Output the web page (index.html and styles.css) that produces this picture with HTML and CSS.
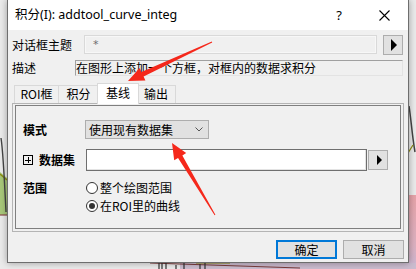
FILE: index.html
```html
<!DOCTYPE html>
<html>
<head>
<meta charset="utf-8">
<link rel="stylesheet" href="styles.css">
</head>
<body>
<div class="desk">
  <svg class="bg" width="416" height="269" viewBox="0 0 416 269">
    <rect width="416" height="269" fill="#ebebeb"/>
    <polygon points="0,172 7,178 7,215 0,215" fill="#a8c87a"/>
    <path d="M0,174 L7,180" stroke="#8c8c10" stroke-width="1.5" fill="none"/>
    <path d="M0,215 L7,215" stroke="#8a4a4a" stroke-width="1.2" fill="none"/>
    <path d="M1,138 C3,150 4,170 6,212" stroke="#454545" stroke-width="1.4" fill="none"/>
    <defs>
      <linearGradient id="pk" x1="0" y1="0" x2="0" y2="1">
        <stop offset="0" stop-color="#e6a3a9"/>
        <stop offset="0.7" stop-color="#dcb2c2"/>
        <stop offset="1" stop-color="#c9b6d2"/>
      </linearGradient>
    </defs>
    <rect x="408" y="195" width="8" height="74" fill="url(#pk)"/>
    <path d="M409,106 C411,118 412,135 415,152" stroke="#454545" stroke-width="1.5" fill="none"/>
    <path d="M408,153 L413,145" stroke="#8c8c10" stroke-width="1.3" fill="none"/>
    <rect x="180" y="263" width="236" height="6" fill="#cbbccf"/>
    <path d="M150,263 L300,268" stroke="#7a3b3b" stroke-width="1.2" fill="none"/>
    <path d="M196,263 L230,263" stroke="#8c8c10" stroke-width="1.2" fill="none"/>
    <path d="M159,263 V269 M162,263 V269 M166,263 V269 M176,265 V269 M184,263 V269 M200,264 V269 M205,263 V269" stroke="#333" stroke-width="1.2"/>
  </svg>

  <div class="win">
    <div class="titlebar">
      <span class="title">积分(I): addtool_curve_integ</span>
      <span class="cap help">?</span>
      <span class="cap close">
        <svg width="11" height="11" viewBox="0 0 11 11"><path d="M0.5,0.5 L10.5,10.5 M10.5,0.5 L0.5,10.5" stroke="#000" stroke-width="1.1" fill="none"/></svg>
      </span>
    </div>

    <div class="row r1">
      <span class="lbl l72">对话框主题</span>
      <div class="ro-input">*</div>
      <div class="arrow-btn big">
        <svg width="6" height="12" viewBox="0 0 6 12"><polygon points="0,0 6,6 0,12" fill="#000"/></svg>
      </div>
    </div>

    <div class="row r2">
      <span class="lbl l63">描述</span>
      <div class="desc">在图形上添加一个方框，对框内的数据求积分</div>
    </div>

    <div class="tabs">
      <div class="tab t1">ROI框</div>
      <div class="tab t2">积分</div>
      <div class="tab t3 sel">基线</div>
      <div class="tab t4">输出</div>
    </div>

    <div class="panel">
      <div class="frame">
        <div class="frow mode">
          <span class="blbl">模式</span>
          <div class="combo">
            <span>使用现有数据集</span>
            <svg class="chev" width="8" height="5" viewBox="0 0 8 5"><polyline points="0.5,0.5 4,4 7.5,0.5" stroke="#555" stroke-width="1" fill="none"/></svg>
          </div>
        </div>
        <div class="frow data">
          <span class="blbl"><span class="plus"></span>数据集</span>
          <div class="edit"></div>
          <div class="arrow-btn small">
            <svg width="5" height="10" viewBox="0 0 5 10"><polygon points="0,0 5,5 0,10" fill="#000"/></svg>
          </div>
        </div>
        <div class="frow range">
          <span class="blbl rl">范围</span>
          <div class="radios">
            <div class="radio"><span class="dot"></span><span class="rtxt">整个绘图范围</span></div>
            <div class="radio"><span class="dot on"></span><span class="rtxt">在ROI里的曲线</span></div>
          </div>
        </div>
      </div>
    </div>

    <div class="buttons">
      <div class="btn def">确定</div>
      <div class="btn">取消</div>
    </div>
  </div>

  <svg class="annot" width="416" height="269" viewBox="0 0 416 269">
    <polygon points="211.8,41.5 141.4,72.0 139.6,67.9 128,81 145.4,80.6 143.6,76.6 212.2,42.5" fill="#f5281b"/>
    <polygon points="172,143 186.2,153.1 182.35,155.4 215.4,214.7 214.6,215.3 178.05,158.0 174.2,160.3" fill="#f5281b"/>
  </svg>
</div>
</body>
</html>
```
FILE: styles.css
```css
* { box-sizing: border-box; }
html, body { margin: 0; padding: 0; }
body {
  width: 416px;
  height: 269px;
  overflow: hidden;
  font-family: "Noto Sans CJK SC", "Noto Sans", sans-serif;
  font-size: 12px;
  color: #000;
}
.desk {
  position: relative;
  width: 416px;
  height: 269px;
  overflow: hidden;
}
.bg { position: absolute; left: 0; top: 0; }
.annot { position: absolute; left: 0; top: 0; pointer-events: none; }

.win {
  position: relative;
  margin-left: 7px;
  width: 402px;
  height: 263px;
  background: #f0f0f0;
  border: 1px solid #6e6e6e;
  border-top: none;
  box-shadow: 0 0 7px rgba(0,0,0,0.35);
  display: flex;
  flex-direction: column;
}

.titlebar {
  height: 30px;
  background: #fff;
  display: flex;
  align-items: center;
  flex: none;
}
.title {
  padding-left: 7px;
  font-family: "Noto Sans", "Noto Sans CJK SC", sans-serif;
  font-size: 12.5px;
  line-height: 16px;
  color: #000;
}
.cap {
  width: 46px;
  height: 30px;
  display: flex;
  align-items: center;
  justify-content: center;
}
.help {
  margin-left: auto;
  font-family: "Noto Sans", sans-serif;
  font-size: 13px;
}
.close { padding-right: 1px; }

.row {
  display: flex;
  align-items: center;
  padding-left: 4px;
  flex: none;
}
.r1 { margin-top: 5px; height: 20px; }
.r2 { margin-top: 5px; height: 16px; }
.lbl { line-height: 16px; white-space: nowrap; }
.l72 { width: 72px; }
.l63 { width: 63px; }

.ro-input {
  width: 293px;
  height: 19px;
  align-self: flex-start;
  background: #f0f0f0;
  border: 1px solid #d9d9d9;
  box-shadow: inset 0 0 0 1px #f7f7f7;
  color: #6d6d6d;
  padding-left: 8px;
  line-height: 17px;
  font-family: "DejaVu Sans", sans-serif;
  font-size: 11px;
}
.arrow-btn {
  background: #e1e1e1;
  border: 1px solid #adadad;
  display: flex;
  align-items: center;
  justify-content: center;
}
.arrow-btn.big { width: 20px; height: 20px; margin-left: 6px; padding-left: 2px; }
.arrow-btn.small { width: 20px; height: 20px; margin-left: 1px; padding-left: 2px; }

.desc {
  width: 328px;
  height: 16px;
  border-top: 1px solid #a0a0a0;
  border-left: 1px solid #a0a0a0;
  border-right: 1px solid #e3e3e3;
  border-bottom: 1px solid #e3e3e3;
  line-height: 14px;
  white-space: nowrap;
  overflow: hidden;
}

.tabs {
  margin-top: 7px;
  height: 20px;
  display: flex;
  align-items: flex-end;
  padding-left: 6px;
  flex: none;
  position: relative;
  z-index: 2;
}
.tab {
  height: 18px;
  border: 1px solid #d9d9d9;
  border-bottom: none;
  background: #f0f0f0;
  text-align: center;
  line-height: 16px;
  white-space: nowrap;
}
.tab + .tab { border-left: none; }
.t1 { width: 45px; }
.t2 { width: 40px; }
.t3 { width: 42px; }
.t4 { width: 39px; }
.tab.sel {
  height: 21px;
  margin: 0 -2px -1px -2px;
  background: #fff;
  border-left: 1px solid #d9d9d9;
  position: relative;
  z-index: 3;
  line-height: 18px;
}
.tab.sel + .tab { border-left: none; }

.panel {
  margin-left: 4px;
  width: 392px;
  height: 129px;
  border: 1px solid #b4b4b4;
  padding: 1px 2px 2px 2px;
  flex: none;
}
.frame {
  height: 100%;
  border: 1px solid #7f7f7f;
  padding-left: 7px;
}
.frow { display: flex; align-items: center; }
.blbl {
  width: 62px;
  font-weight: bold;
  line-height: 16px;
  display: flex;
  align-items: center;
  white-space: nowrap;
}
.mode { margin-top: 14px; height: 19px; }
.combo {
  width: 124px;
  height: 19px;
  background: #e1e1e1;
  border: 1px solid #adadad;
  display: flex;
  align-items: center;
  padding-left: 3px;
  padding-right: 5px;
  line-height: 16px;
}
.chev { margin-left: auto; }

.data { margin-top: 10px; height: 22px; }
.plus {
  width: 10px;
  height: 10px;
  border: 1px solid #000;
  margin-right: 6px;
  position: relative;
  flex: none;
}
.plus::before, .plus::after {
  content: "";
  position: absolute;
  background: #000;
}
.plus::before { left: 1px; top: 4px; width: 6px; height: 1px; }
.plus::after { left: 4px; top: 1px; width: 1px; height: 6px; }
.edit {
  margin-left: 1px;
  width: 281px;
  height: 22px;
  background: #fff;
  border: 1px solid #6f6f6f;
  box-shadow: inset -1px -1px 0 #e3e3e3;
}

.range { margin-top: 8px; align-items: flex-start; }
.rl { height: 18px; }
.radios { display: flex; flex-direction: column; }
.radio { height: 18px; display: flex; align-items: center; padding-left: 1px; }
.dot {
  width: 12px;
  height: 12px;
  border-radius: 50%;
  border: 1px solid #333;
  background: #fff;
  margin-right: 2px;
  position: relative;
  flex: none;
}
.dot.on::after {
  content: "";
  position: absolute;
  left: 2px; top: 2px;
  width: 6px; height: 6px;
  border-radius: 50%;
  background: #333;
}
.rtxt { line-height: 16px; }

.buttons {
  margin-top: 8px;
  display: flex;
  justify-content: flex-end;
  padding-right: 4px;
  gap: 6px;
  flex: none;
}
.btn {
  width: 61px;
  height: 19px;
  background: #e1e1e1;
  border: 1px solid #adadad;
  display: flex;
  align-items: center;
  justify-content: center;
  line-height: 16px;
}
.btn.def { border: 2px solid #0078d7; }
```
